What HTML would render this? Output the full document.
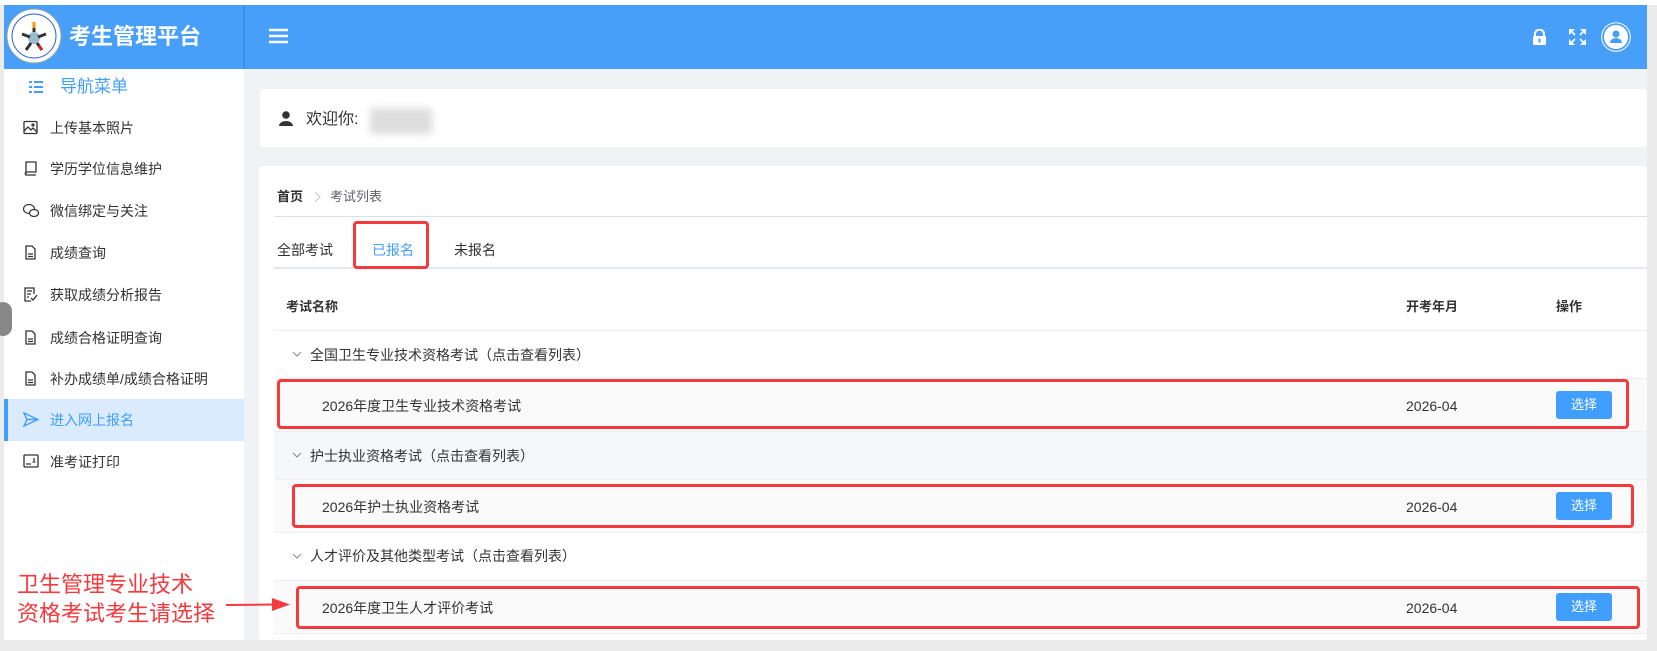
<!DOCTYPE html>
<html><head><meta charset="utf-8"><style>
*{margin:0;padding:0;box-sizing:border-box}
body{width:1657px;height:651px;background:#ebebeb;position:relative;overflow:hidden;font-family:"Liberation Sans","Noto Sans CJK SC",sans-serif;color:#333;font-size:14px}
.a{position:absolute}
.app{left:4px;top:5px;width:1643px;height:635px;background:#f0f2f5}
.t{position:absolute;white-space:nowrap;line-height:1}
.mi{position:absolute;left:4px;width:240px;height:42px}
.mi .t{left:46px;top:14px;font-size:14px;color:#333}
.mi svg{position:absolute;left:19px;top:13px}
.red{position:absolute;border:3px solid #f5393c;border-radius:4px}
.btn{position:absolute;left:1556px;width:56px;height:28px;background:#409eff;border-radius:3px;color:#fff;font-size:13px;text-align:center;line-height:28px}
.row{position:absolute;left:274px;width:1373px;border-bottom:1px solid #ebeef5}
</style></head><body>
<div style="position:absolute;left:0;top:0;width:1657px;height:5px;background:#fff"></div>
<div class="a app"></div>
<div class="a" style="left:4px;top:5px;width:240px;height:635px;background:#fff"></div>
<div class="a" style="left:4px;top:5px;width:1643px;height:64px;background:#479ffa"></div>
<div class="a" style="left:243px;top:5px;width:2px;height:64px;background:#3d8ee6"></div>
<svg class="a" style="left:6px;top:8px" width="56" height="56" viewBox="0 0 56 56"><circle cx="28" cy="28" r="27" fill="#fff" stroke="#8aa" stroke-width="1"/><circle cx="28" cy="28" r="22" fill="none" stroke="#36c" stroke-width="1"/><circle cx="28" cy="30" r="6" fill="#9bc"/><path d="M28 14l0 10M16 26l8 3M40 26l-8 3M20 42l5-7M36 42l-5-7" stroke="#333" stroke-width="3"/><path d="M28 14l0 6" stroke="#f90" stroke-width="3"/><path d="M36 42l-3-4" stroke="#d22" stroke-width="3"/></svg>
<div class="t" style="left:69px;top:26px;font-size:22px;font-weight:bold;color:#fff">考生管理平台</div>
<svg class="a" style="left:269px;top:28px" width="20" height="16"><path d="M0 2h19M0 8h19M0 14h19" stroke="#fff" stroke-width="2.4"/></svg>
<svg class="a" style="left:1531px;top:29px" width="17" height="16" viewBox="0 0 17 16"><path d="M4 7V5a4.5 4.5 0 019 0v2" fill="none" stroke="#fff" stroke-width="2"/><rect x="2" y="7" width="13" height="9" rx="1" fill="#fff"/><rect x="7.5" y="9.5" width="2" height="4" fill="#479ffa"/></svg>
<svg class="a" style="left:1569px;top:29px" width="17" height="16" viewBox="0 0 17 16" fill="#fff"><path d="M0 0h6L0 6zM17 0h-6l6 6zM0 16h6L0 10zM17 16h-6l6-6z"/><path d="M2 2l4 4M15 2l-4 4M2 14l4-4M15 14l-4-4" stroke="#fff" stroke-width="1.6"/></svg>
<svg class="a" style="left:1601px;top:22px" width="30" height="30" viewBox="0 0 30 30"><circle cx="15" cy="15" r="14.3" fill="none" stroke="#fff" stroke-width="1"/><circle cx="15" cy="15" r="12" fill="#fff"/><circle cx="15" cy="12" r="3.5" fill="#479ffa"/><path d="M9 21a6 5 0 0112 0z" fill="#479ffa"/></svg>
<svg class="a" style="left:29px;top:81px" width="14" height="12"><path d="M0 1h3M5 1h9M0 6h3M5 6h9M0 11h3M5 11h9" stroke="#409eff" stroke-width="2"/></svg>
<div class="t" style="left:60px;top:78px;font-size:17px;color:#409eff">导航菜单</div>
<div class="mi" style="top:107px"><svg width="15" height="15" viewBox="0 0 15 15" fill="none" stroke="#333" stroke-width="1.3"><rect x="1" y="1.5" width="13" height="12" rx="1"/><path d="M1 11l4-4 3 3 2-2 4 4"/><circle cx="10" cy="5" r="1"/></svg><div class="t">上传基本照片</div></div>
<div class="mi" style="top:148px"><svg width="15" height="15" viewBox="0 0 15 15" fill="none" stroke="#333" stroke-width="1.3"><path d="M3 1h10v10H3zM3 11a2 2 0 000 3h10M3 1v12"/></svg><div class="t">学历学位信息维护</div></div>
<div class="mi" style="top:190px"><svg width="16" height="15" viewBox="0 0 16 15" fill="none" stroke="#333" stroke-width="1.2"><ellipse cx="6" cy="6" rx="5.5" ry="4.5"/><ellipse cx="11" cy="10" rx="4.5" ry="3.5" fill="#fff"/></svg><div class="t">微信绑定与关注</div></div>
<div class="mi" style="top:232px"><svg width="15" height="15" viewBox="0 0 15 15" fill="none" stroke="#333" stroke-width="1.3"><path d="M3 1h6l3 3v10H3z"/><path d="M5 9h5M5 11.5h5"/></svg><div class="t">成绩查询</div></div>
<div class="mi" style="top:274px"><svg width="15" height="15" viewBox="0 0 15 15" fill="none" stroke="#333" stroke-width="1.3"><path d="M11 7V1H2v13h6"/><path d="M4 4h5M4 7h4M4 10h2M8 11l2 2 4-5"/></svg><div class="t">获取成绩分析报告</div></div>
<div class="mi" style="top:317px"><svg width="15" height="15" viewBox="0 0 15 15" fill="none" stroke="#333" stroke-width="1.3"><path d="M3 1h6l3 3v10H3z"/><path d="M5 9h5M5 11.5h5"/></svg><div class="t">成绩合格证明查询</div></div>
<div class="mi" style="top:358px"><svg width="15" height="15" viewBox="0 0 15 15" fill="none" stroke="#333" stroke-width="1.3"><path d="M3 1h6l3 3v10H3z"/><path d="M5 9h5M5 11.5h5"/></svg><div class="t">补办成绩单/成绩合格证明</div></div>
<div class="mi" style="top:399px;background:#d9ebfd;border-left:4px solid #409eff"><svg style="left:15px" width="16" height="15" viewBox="0 0 16 15" fill="none" stroke="#409eff" stroke-width="1.4"><path d="M1 1l14 6.5L1 14l3-6.5zM4 7.5h11"/></svg><div class="t" style="left:42px;color:#409eff">进入网上报名</div></div>
<div class="mi" style="top:441px"><svg width="16" height="14" viewBox="0 0 16 14" fill="none" stroke="#333" stroke-width="1.3"><rect x="1" y="1" width="14" height="12" rx="1"/><path d="M3 10h5M11 4v3M9.5 8h3"/></svg><div class="t">准考证打印</div></div>
<div class="a" style="left:-6px;top:302px;width:18px;height:34px;border-radius:17px;background:#888"></div>
<div class="t" style="left:17px;top:574px;font-size:22px;color:#f5393c">卫生管理专业技术</div>
<div class="t" style="left:17px;top:603px;font-size:22px;color:#f5393c">资格考试考生请选择</div>
<div class="a" style="left:260px;top:89px;width:1387px;height:58px;background:#fff;border-radius:4px"></div>
<svg class="a" style="left:278px;top:111px" width="16" height="15" viewBox="0 0 16 15" fill="#333"><circle cx="8" cy="4" r="3.8"/><path d="M1 15a7 5 0 0114 0z"/></svg>
<div class="t" style="left:306px;top:112px;font-size:16px;color:#333">欢迎你:</div>
<div class="a" style="left:370px;top:108px;width:62px;height:26px;background:#ddd;filter:blur(4px)"></div>
<div class="a" style="left:259px;top:166px;width:1388px;height:474px;background:#fff;border-radius:4px"></div>
<div class="t" style="left:277px;top:190px;font-size:13px;font-weight:bold;color:#303133">首页</div>
<svg class="a" style="left:313px;top:191px" width="8" height="12"><path d="M2 1l5 5-5 5" fill="none" stroke="#c0c4cc" stroke-width="1"/></svg>
<div class="t" style="left:330px;top:190px;font-size:13px;color:#606266">考试列表</div>
<div class="a" style="left:274px;top:216px;width:1373px;height:1px;background:#dcdfe6"></div>
<div class="t" style="left:277px;top:243px;font-size:14px;color:#303133">全部考试</div>
<div class="t" style="left:372px;top:243px;font-size:14px;color:#409eff">已报名</div>
<div class="t" style="left:454px;top:243px;font-size:14px;color:#303133">未报名</div>
<div class="a" style="left:274px;top:267px;width:1373px;height:2px;background:#e4e7ed"></div>
<div class="red" style="left:353px;top:221px;width:76px;height:48px"></div>
<div class="row" style="top:282px;height:49px"></div>
<div class="t" style="left:286px;top:300px;font-size:13px;font-weight:bold;color:#333">考试名称</div>
<div class="t" style="left:1406px;top:300px;font-size:13px;font-weight:bold;color:#333">开考年月</div>
<div class="t" style="left:1556px;top:300px;font-size:13px;font-weight:bold;color:#333">操作</div>
<div class="row" style="top:331px;height:48px"></div>
<svg class="a" style="left:292px;top:351px" width="10" height="7"><path d="M1 1l4 4 4-4" fill="none" stroke="#888" stroke-width="1"/></svg>
<div class="t" style="left:310px;top:348px;font-size:14px;color:#333">全国卫生专业技术资格考试（点击查看列表）</div>
<div class="row" style="top:379px;height:53px;background:#fafafa"></div>
<div class="t" style="left:322px;top:399px;font-size:14px;color:#333">2026年度卫生专业技术资格考试</div>
<div class="t" style="left:1406px;top:399px;font-size:14px;color:#333">2026-04</div>
<div class="btn" style="top:391px">选择</div>
<div class="red" style="left:277px;top:379px;width:1352px;height:50px"></div>
<div class="row" style="top:432px;height:48px;background:#f5f7fa"></div>
<svg class="a" style="left:292px;top:452px" width="10" height="7"><path d="M1 1l4 4 4-4" fill="none" stroke="#888" stroke-width="1"/></svg>
<div class="t" style="left:310px;top:449px;font-size:14px;color:#333">护士执业资格考试（点击查看列表）</div>
<div class="row" style="top:480px;height:53px;background:#fafafa"></div>
<div class="t" style="left:322px;top:500px;font-size:14px;color:#333">2026年护士执业资格考试</div>
<div class="t" style="left:1406px;top:500px;font-size:14px;color:#333">2026-04</div>
<div class="btn" style="top:492px">选择</div>
<div class="red" style="left:292px;top:484px;width:1342px;height:44px"></div>
<div class="row" style="top:533px;height:48px"></div>
<svg class="a" style="left:292px;top:553px" width="10" height="7"><path d="M1 1l4 4 4-4" fill="none" stroke="#888" stroke-width="1"/></svg>
<div class="t" style="left:310px;top:549px;font-size:14px;color:#333">人才评价及其他类型考试（点击查看列表）</div>
<div class="row" style="top:581px;height:53px;background:#fafafa"></div>
<div class="t" style="left:322px;top:601px;font-size:14px;color:#333">2026年度卫生人才评价考试</div>
<div class="t" style="left:1406px;top:601px;font-size:14px;color:#333">2026-04</div>
<div class="btn" style="top:593px">选择</div>
<div class="red" style="left:296px;top:586px;width:1344px;height:43px"></div>
<svg class="a" style="left:224px;top:596px;z-index:5" width="68" height="18"><path d="M2 9L50 8.5" stroke="#f5393c" stroke-width="2"/><path d="M48 2L66 8.5 48 15z" fill="#f5393c"/></svg>
</body></html>
